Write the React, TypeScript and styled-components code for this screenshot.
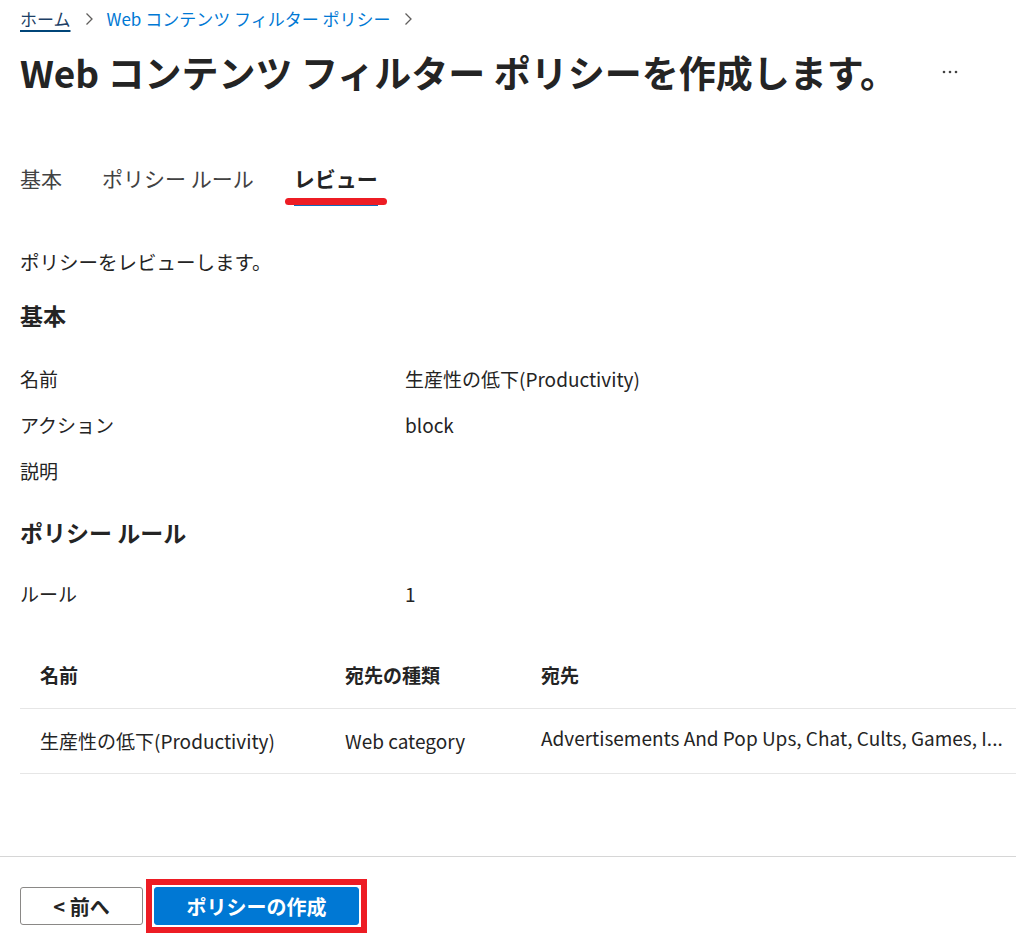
import React from "react";
import styled, { createGlobalStyle } from "styled-components";

const GlobalStyle = createGlobalStyle`
  html, body { margin: 0; padding: 0; background: #ffffff; }
  body {
    font-family: "Noto Sans CJK JP", "Noto Sans", sans-serif;
    color: #242424;
  }
  * { box-sizing: border-box; }
`;

const Page = styled.div`
  min-height: 100vh;
  display: flex;
  flex-direction: column;
`;

const Main = styled.main`
  flex: 1;
  padding: 8px 0 0 20px;
  display: flex;
  flex-direction: column;
`;

const Breadcrumb = styled.nav`
  display: flex;
  align-items: center;
  height: 22px;
  font-size: 17px;
  line-height: 22px;
`;

const Crumb = styled.a<{ $home?: boolean }>`
  color: ${(p) => (p.$home ? "#1c3f66" : "#0078d4")};
  text-decoration: ${(p) => (p.$home ? "underline" : "none")};
  text-decoration-thickness: 2px;
  text-underline-offset: 4px;
  text-decoration-color: #004578;
  cursor: pointer;
`;

const Sep = styled.span`
  display: inline-flex;
  align-items: center;
  margin: 0 13px 0 14px;
`;

const TitleRow = styled.div`
  display: flex;
  align-items: center;
  margin-top: 18px;
  height: 48px;
`;

const Title = styled.h1`
  margin: 0;
  font-size: 37px;
  font-weight: 700;
  line-height: 48px;
  color: #242424;
  white-space: nowrap;
`;

const MoreButton = styled.button`
  margin-left: 40px;
  border: none;
  background: transparent;
  padding: 4px;
  display: inline-flex;
  align-items: center;
  cursor: pointer;
`;

const Tabs = styled.div`
  display: flex;
  gap: 40px;
  margin-top: 68px;
`;

const Tab = styled.div<{ $active?: boolean }>`
  position: relative;
  font-size: 21px;
  line-height: 28px;
  padding-bottom: 11px;
  font-weight: ${(p) => (p.$active ? 700 : 400)};
  color: ${(p) => (p.$active ? "#242424" : "#424242")};
  border-bottom: 3px solid ${(p) => (p.$active ? "#0f6cbd" : "transparent")};
  cursor: pointer;
`;

const RedStroke = styled.span`
  position: absolute;
  left: -9px;
  right: -9px;
  bottom: -2px;
  height: 7px;
  border-radius: 4px;
  background: #ed1c24;
`;

const Intro = styled.p`
  margin: 43px 0 0;
  font-size: 19.5px;
  line-height: 26px;
  color: #242424;
`;

const SectionTitle = styled.h2<{ $top: number }>`
  margin: ${(p) => p.$top}px 0 0;
  font-size: 23px;
  font-weight: 700;
  line-height: 30px;
  color: #242424;
`;

const Fields = styled.div<{ $top: number }>`
  margin-top: ${(p) => p.$top}px;
  display: flex;
  flex-direction: column;
`;

const FieldRow = styled.div`
  display: grid;
  grid-template-columns: 385px 1fr;
  align-items: center;
  height: 46px;
  font-size: 19px;
  line-height: 26px;
  color: #242424;
`;

const Table = styled.div`
  margin-top: 25px;
  display: flex;
  flex-direction: column;
`;

const TRow = styled.div<{ $head?: boolean }>`
  display: grid;
  grid-template-columns: 305px 196px 1fr;
  align-items: center;
  height: ${(p) => (p.$head ? 67 : 65)}px;
  border-bottom: 1px solid #e6e6e6;
  font-size: 19px;
  font-weight: ${(p) => (p.$head ? 700 : 400)};
  color: #242424;
`;

const Cell = styled.div<{ $raise?: boolean }>`
  padding: 0 8px 0 20px;
  white-space: nowrap;
  overflow: hidden;
  line-height: 26px;
  transform: translateY(${(p) => (p.$raise ? -3 : 0)}px);
`;

const Footer = styled.footer`
  height: 93px;
  border-top: 1px solid #d6d6d6;
  padding: 30px 20px 0;
  display: flex;
  gap: 11px;
  align-items: flex-start;
`;

const Button = styled.button<{ $primary?: boolean }>`
  position: relative;
  height: 38px;
  width: ${(p) => (p.$primary ? 205 : 123)}px;
  border-radius: 3px;
  border: 1px solid ${(p) => (p.$primary ? "#0078d4" : "#8a8886")};
  background: ${(p) => (p.$primary ? "#0078d4" : "#ffffff")};
  color: ${(p) => (p.$primary ? "#ffffff" : "#242424")};
  font-family: "Noto Sans CJK JP", "Noto Sans", sans-serif;
  font-size: 20px;
  font-weight: 700;
  cursor: pointer;
  padding: 0;
`;

const Highlight = styled.span`
  position: absolute;
  inset: -9px -9px -9px -9px;
  border: 6px solid #ed1c24;
  pointer-events: none;
`;

const Chevron = () => (
  <svg width="9" height="14" viewBox="0 0 9 14" fill="none">
    <path d="M1.5 1.5 L7 7 L1.5 12.5" stroke="#605e5c" strokeWidth="1.3" />
  </svg>
);

const Dots = () => (
  <svg width="18" height="6" viewBox="0 0 18 6">
    <circle cx="3" cy="3" r="1.3" fill="#424242" />
    <circle cx="9" cy="3" r="1.3" fill="#424242" />
    <circle cx="15" cy="3" r="1.3" fill="#424242" />
  </svg>
);

export default function App() {
  return (
    <Page>
      <GlobalStyle />
      <Main>
        <Breadcrumb>
          <Crumb $home>ホーム</Crumb>
          <Sep>
            <Chevron />
          </Sep>
          <Crumb>Web コンテンツ フィルター ポリシー</Crumb>
          <Sep>
            <Chevron />
          </Sep>
        </Breadcrumb>
        <TitleRow>
          <Title>Web コンテンツ フィルター ポリシーを作成します。</Title>
          <MoreButton aria-label="more">
            <Dots />
          </MoreButton>
        </TitleRow>
        <Tabs>
          <Tab>基本</Tab>
          <Tab>ポリシー ルール</Tab>
          <Tab $active>
            レビュー
            <RedStroke />
          </Tab>
        </Tabs>
        <Intro>ポリシーをレビューします。</Intro>
        <SectionTitle $top={25}>基本</SectionTitle>
        <Fields $top={26}>
          <FieldRow>
            <span>名前</span>
            <span>生産性の低下(Productivity)</span>
          </FieldRow>
          <FieldRow>
            <span>アクション</span>
            <span>block</span>
          </FieldRow>
          <FieldRow>
            <span>説明</span>
            <span></span>
          </FieldRow>
        </Fields>
        <SectionTitle $top={23}>ポリシー ルール</SectionTitle>
        <Fields $top={24}>
          <FieldRow>
            <span>ルール</span>
            <span>1</span>
          </FieldRow>
        </Fields>
        <Table>
          <TRow $head>
            <Cell>名前</Cell>
            <Cell>宛先の種類</Cell>
            <Cell>宛先</Cell>
          </TRow>
          <TRow>
            <Cell>生産性の低下(Productivity)</Cell>
            <Cell>Web category</Cell>
            <Cell $raise>Advertisements And Pop Ups, Chat, Cults, Games, I...</Cell>
          </TRow>
        </Table>
      </Main>
      <Footer>
        <Button>&lt; 前へ</Button>
        <Button $primary>
          ポリシーの作成
          <Highlight />
        </Button>
      </Footer>
    </Page>
  );
}
